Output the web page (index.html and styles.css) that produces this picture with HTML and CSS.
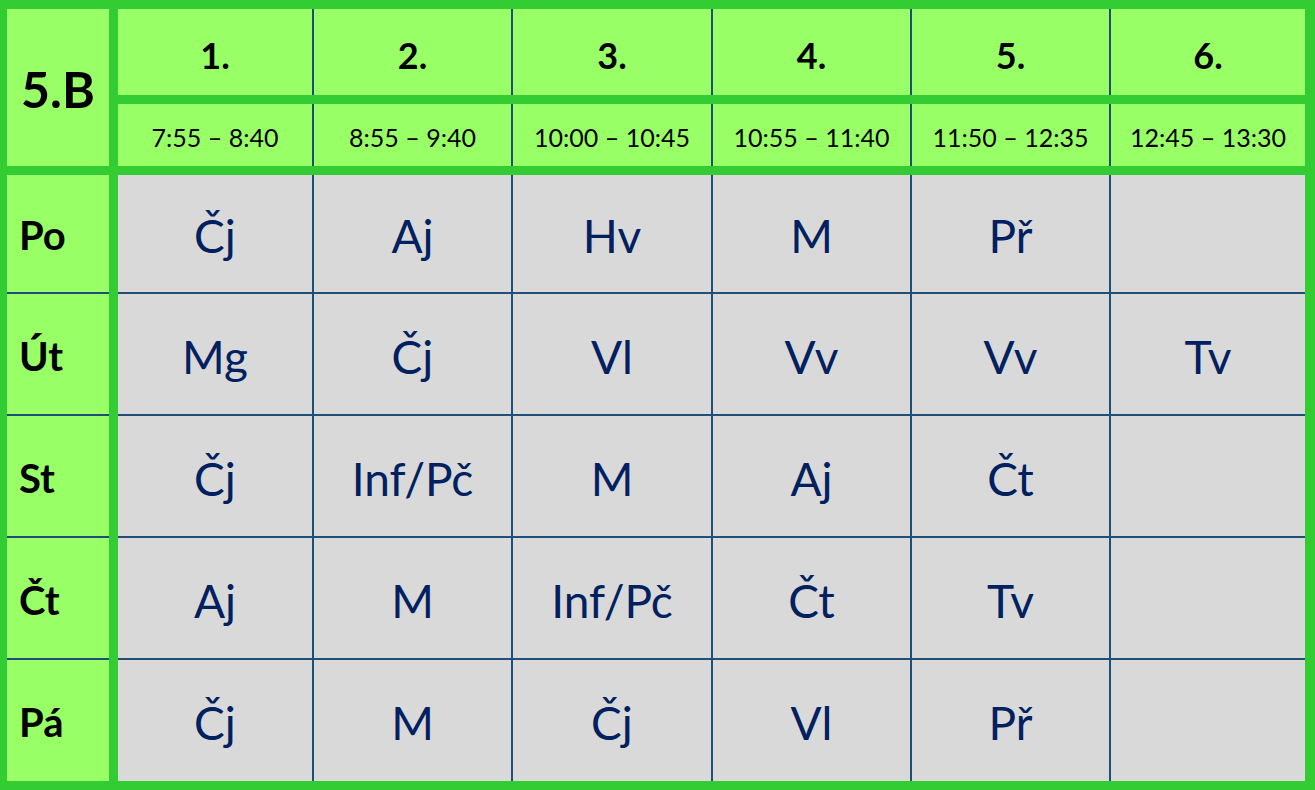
FILE: index.html
```html
<!DOCTYPE html>
<html lang="cs">
<head>
<meta charset="utf-8">
<title>Rozvrh 5.B</title>
<link rel="stylesheet" href="styles.css">
</head>
<body>
<div class="timetable">
  <div class="corner">5.B</div>
  <div class="head">
    <div class="period">1.</div>
    <div class="period">2.</div>
    <div class="period">3.</div>
    <div class="period">4.</div>
    <div class="period">5.</div>
    <div class="period">6.</div>
    <div class="time">7:55 – 8:40</div>
    <div class="time">8:55 – 9:40</div>
    <div class="time">10:00 – 10:45</div>
    <div class="time">10:55 – 11:40</div>
    <div class="time">11:50 – 12:35</div>
    <div class="time">12:45 – 13:30</div>
  </div>
  <div class="days">
    <div class="day">Po</div>
    <div class="day">Út</div>
    <div class="day">St</div>
    <div class="day">Čt</div>
    <div class="day">Pá</div>
  </div>
  <div class="lessons">
    <div class="lesson">Čj</div>
    <div class="lesson">Aj</div>
    <div class="lesson">Hv</div>
    <div class="lesson">M</div>
    <div class="lesson">Př</div>
    <div class="lesson"></div>

    <div class="lesson">Mg</div>
    <div class="lesson">Čj</div>
    <div class="lesson">Vl</div>
    <div class="lesson">Vv</div>
    <div class="lesson">Vv</div>
    <div class="lesson">Tv</div>

    <div class="lesson">Čj</div>
    <div class="lesson">Inf/Pč</div>
    <div class="lesson">M</div>
    <div class="lesson">Aj</div>
    <div class="lesson">Čt</div>
    <div class="lesson"></div>

    <div class="lesson">Aj</div>
    <div class="lesson">M</div>
    <div class="lesson">Inf/Pč</div>
    <div class="lesson">Čt</div>
    <div class="lesson">Tv</div>
    <div class="lesson"></div>

    <div class="lesson">Čj</div>
    <div class="lesson">M</div>
    <div class="lesson">Čj</div>
    <div class="lesson">Vl</div>
    <div class="lesson">Př</div>
    <div class="lesson"></div>
  </div>
</div>
</body>
</html>
```
FILE: styles.css
```css
* {
  box-sizing: border-box;
}

html, body {
  margin: 0;
  padding: 0;
  background: #ffffff;
}

body {
  font-family: Lato, "Liberation Sans", sans-serif;
}

.timetable {
  width: 1315px;
  height: 790px;
  background: #33cc33;
  padding: 9px 10px 9px 7px;
  display: grid;
  grid-template-columns: 102px 1187px;
  grid-template-rows: 157px 606px;
  column-gap: 9px;
  row-gap: 9px;
}

.corner {
  background: #99ff66;
  color: #000;
  font-weight: 700;
  font-size: 50px;
  display: flex;
  align-items: center;
  justify-content: center;
  padding-top: 3px;
}

.head {
  display: grid;
  grid-template-columns: 196px 199px 200px 199px 199px 194px;
  grid-template-rows: 86px 62px;
  row-gap: 9px;
}

.period,
.time {
  background: #99ff66;
  color: #000;
  border-right: 2px solid #1f4e79;
  display: flex;
  align-items: center;
  justify-content: center;
}

.period:nth-child(6n),
.time:nth-child(6n) {
  border-right: none;
}

.period {
  font-weight: 700;
  font-size: 36px;
  padding-top: 6px;
}

.time {
  font-size: 25px;
  padding-top: 3px;
}

.days {
  display: grid;
  grid-template-rows: 119px 122px 122px 122px 121px;
}

.day {
  background: #99ff66;
  color: #000;
  font-weight: 700;
  font-size: 40px;
  border-bottom: 2px solid #1f4e79;
  display: flex;
  align-items: center;
  padding-left: 12px;
  padding-top: 3px;
}

.day:last-child {
  border-bottom: none;
}

.lessons {
  display: grid;
  grid-template-columns: 196px 199px 200px 199px 199px 194px;
  grid-template-rows: 119px 122px 122px 122px 121px;
}

.lesson {
  background: #d9d9d9;
  color: #002060;
  font-size: 46px;
  border-right: 2px solid #1f4e79;
  border-bottom: 2px solid #1f4e79;
  display: flex;
  align-items: center;
  justify-content: center;
  padding-top: 4px;
}

.lesson:nth-child(6n) {
  border-right: none;
}

.lesson:nth-last-child(-n+6) {
  border-bottom: none;
}
```
